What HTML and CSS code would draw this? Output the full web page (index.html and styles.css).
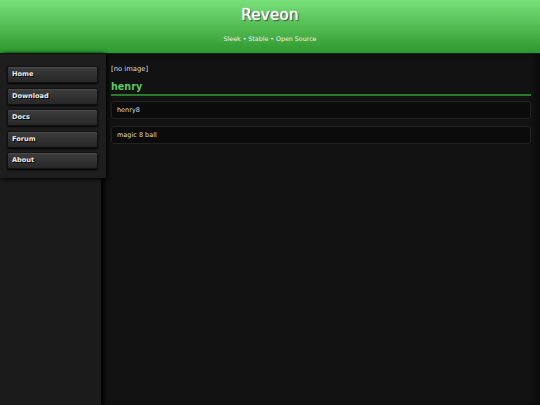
FILE: index.html
```html
<!DOCTYPE html>
<html>
<head>
<meta charset="utf-8">
<title>Reveon</title>
<link rel="stylesheet" href="styles.css">
</head>
<body>
<header class="site-header">
  <h1 class="site-title">Reveon</h1>
  <p class="site-tagline">Sleek • Stable • Open Source</p>
</header>
<div class="layout">
  <aside class="sidebar">
    <nav class="nav">
      <a class="nav-btn" href="#">Home</a>
      <a class="nav-btn" href="#">Download</a>
      <a class="nav-btn" href="#">Docs</a>
      <a class="nav-btn" href="#">Forum</a>
      <a class="nav-btn" href="#">About</a>
    </nav>
  </aside>
  <main class="content">
    <div class="no-image">[no image]</div>
    <h2 class="user-name">henry</h2>
    <div class="item">henry8</div>
    <div class="item">magic 8 ball</div>
  </main>
</div>
</body>
</html>
```

FILE: styles.css
```css
html, body {
  margin: 0;
  padding: 0;
  height: 100%;
}
body {
  background: #121212;
  font-family: "DejaVu Sans", Verdana, sans-serif;
  color: #ddd;
  display: flex;
  flex-direction: column;
}
.site-header {
  height: 53px;
  background: linear-gradient(#78e078, #2e982e);
  border-bottom: 1px solid #0b2424;
  text-align: center;
  flex: none;
}
.site-title {
  margin: 0;
  padding-top: 4px;
  font-size: 15px;
  line-height: 22px;
  font-weight: normal;
  color: #fff;
  text-shadow: 0 0 1px #fff, 1px 1px 1px #333;
  letter-spacing: 0.3px;
}
.site-tagline {
  margin: 0;
  padding-top: 9px;
  font-size: 6.3px;
  line-height: 8px;
  color: #eef;
}
.layout {
  flex: 1;
  display: flex;
}
.sidebar {
  width: 101px;
  flex: none;
  background: #1b1b1b;
  box-shadow: 3px 0 4px #000;
  position: relative;
  z-index: 1;
}
.nav {
  width: 106px;
  background: #1e1e1e;
  box-shadow: 1px 1px 4px #000;
  padding: 12px 0 9px;
  box-sizing: border-box;
  display: flex;
  flex-direction: column;
  gap: 4.5px;
}
.nav-btn {
  display: block;
  margin-left: 7px;
  width: 91px;
  height: 17px;
  box-sizing: border-box;
  border: 1px solid #121212;
  border-radius: 2px;
  background: linear-gradient(#3d3d3d, #272727);
  box-shadow: 0 1px 2px #000, inset 0 1px 0 #4a4a4a;
  color: #ececec;
  text-decoration: none;
  font-weight: bold;
  font-size: 6.6px;
  line-height: 15px;
  padding-left: 4px;
  text-shadow: 1px 1px 0 #000;
}
.content {
  flex: 1;
  padding: 10px 9px 0 10px;
  background: #121212;
  box-shadow: inset -4px 0 5px #0a0a0a;
}
.no-image {
  font-size: 6.8px;
  line-height: 10px;
  color: #ddd;
}
.user-name {
  margin: 6px 0 5px;
  font-size: 9.6px;
  line-height: 14px;
  color: #5cc95c;
  font-weight: bold;
  border-bottom: 2px solid #2c7a2c;
  padding-bottom: 0;
}
.item {
  height: 18px;
  box-sizing: border-box;
  background: #0b0b0b;
  border: 1px solid #222;
  border-radius: 3px;
  font-size: 6.5px;
  line-height: 16px;
  padding-left: 5px;
  color: #ddd;
  margin-bottom: 7px;
}
```
